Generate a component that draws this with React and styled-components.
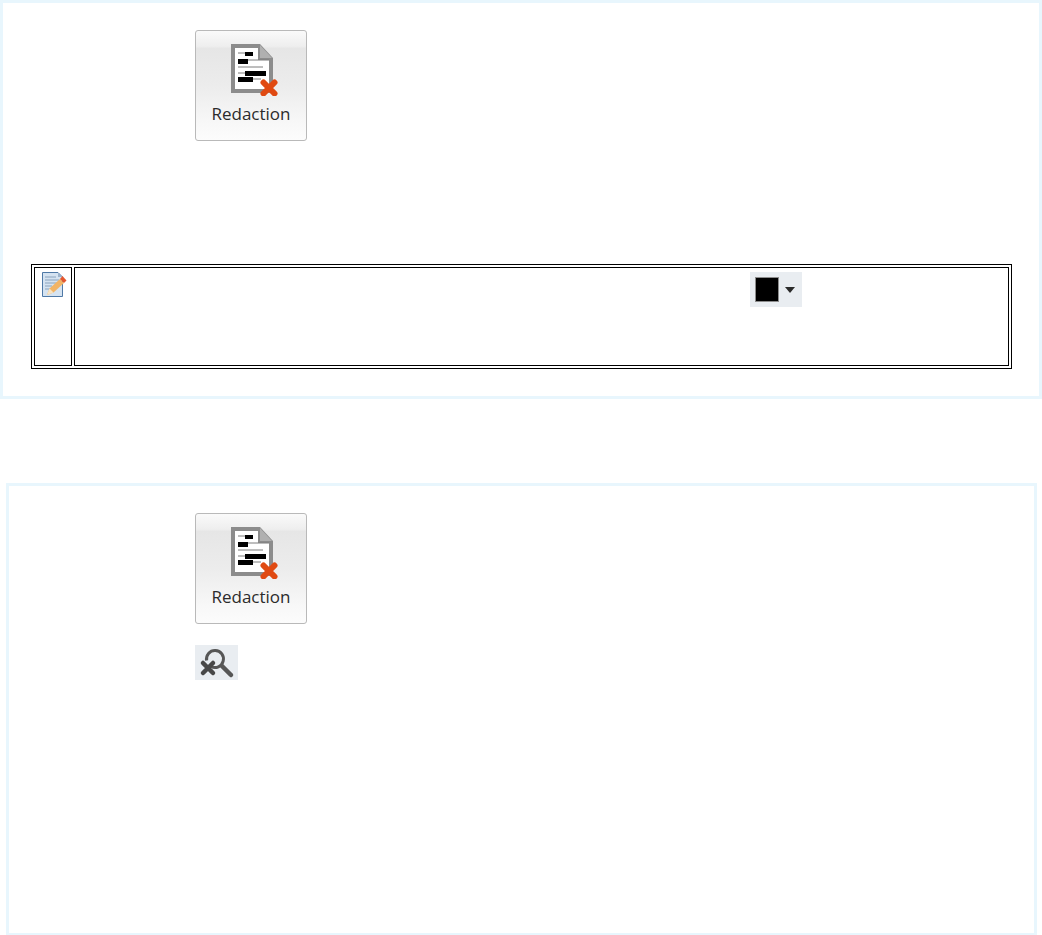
import styled, { createGlobalStyle } from "styled-components";

const GlobalStyle = createGlobalStyle`
  html, body {
    margin: 0;
    padding: 0;
    background: #fff;
    font-family: "Open Sans", "Liberation Sans", sans-serif;
  }
`;

const Page = styled.div`
  width: 1042px;
  height: 935px;
  overflow: hidden;
  display: flex;
  flex-direction: column;
`;

const Panel = styled.section`
  box-sizing: border-box;
  flex: none;
  border: 3px solid #e8f6fd;
  width: ${(props) => props.$width}px;
  height: ${(props) => props.$height}px;
  margin-left: ${(props) => props.$left || 0}px;
  margin-top: ${(props) => props.$top || 0}px;
  padding-top: 27px;
`;

const RibbonButton = styled.div`
  box-sizing: border-box;
  width: 112px;
  height: 111px;
  margin-left: ${(props) => props.$left}px;
  border: 1px solid #b9b9b9;
  border-radius: 3px;
  background: linear-gradient(
    to bottom,
    #fafafa 0%,
    #eeeeee 14%,
    #e6e6e6 16%,
    #ececec 50%,
    #f8f8f8 85%,
    #fcfcfc 100%
  );
  display: flex;
  flex-direction: column;
  align-items: center;
  padding-top: 13px;
  svg {
    margin-left: 8px;
    flex: none;
  }
`;

const RibbonLabel = styled.span`
  font-family: "Open Sans", "Liberation Sans", sans-serif;
  font-size: 17px;
  line-height: 20px;
  margin-top: 8px;
  color: #2b2b2b;
`;

const NoteTable = styled.table`
  box-sizing: border-box;
  width: 981px;
  height: 105px;
  margin: 123px 0 0 28px;
  border: 1px solid #000;
  border-spacing: 2px;
`;

const IconCell = styled.td`
  box-sizing: border-box;
  width: 38px;
  border: 1px solid #000;
  padding: 4px 0 0 7px;
  vertical-align: top;
`;

const BodyCell = styled.td`
  border: 1px solid #000;
  padding: 4px 0 0 675px;
  vertical-align: top;
`;

const ColorChip = styled.div`
  box-sizing: border-box;
  display: flex;
  align-items: center;
  background: #e9edf1;
  width: 52px;
  height: 35px;
  padding-left: 5px;
`;

const Swatch = styled.span`
  box-sizing: border-box;
  width: 24px;
  height: 25px;
  background: #000;
  border: 1px solid #8d8d8d;
  margin-right: 6px;
`;

const Caret = styled.span`
  width: 0;
  height: 0;
  border-left: 5px solid transparent;
  border-right: 5px solid transparent;
  border-top: 6px solid #2a2a2a;
`;

const SearchChip = styled.div`
  width: 43px;
  height: 35px;
  margin: 21px 0 0 186px;
  background: #e9edf1;
  svg {
    display: block;
  }
`;

function RedactionIcon() {
  return (
    <svg width="48" height="52" viewBox="0 0 48 52">
      <path d="M0 0H29L42 14V49H0Z" fill="#8c8c8c" />
      <path d="M4 4H27V16H38V45H4Z" fill="#fff" />
      <path d="M29 1L41 14H29Z" fill="#b0b0b0" />
      <path
        d="M7 9H14M7 16H38M7 23H32M7 29H14M7 35H30"
        stroke="#7d7d7d"
        strokeWidth="1"
      />
      <rect x="14" y="8" width="8" height="4" fill="#000" />
      <rect x="7" y="15" width="10" height="5" fill="#000" />
      <rect x="14" y="27" width="21" height="5" fill="#000" />
      <rect x="7" y="33" width="15" height="5" fill="#000" />
      <path d="M32.5 38.5L43.5 49.5M43.5 38.5L32.5 49.5" stroke="#e04a12" strokeWidth="6" strokeLinecap="round" />
    </svg>
  );
}

function NoteIcon() {
  return (
    <svg width="25" height="25" viewBox="0 0 25 25" style={{ display: "block" }}>
      <path d="M0.5 0.5H16L20.5 5V24.5H0.5Z" fill="#d5e3f1" stroke="#4f79a6" />
      <path d="M16 1V5H20Z" fill="#9db4cc" />
      <path d="M3 5H14M3 8H17M3 11H15M3 14H10M3 17H8" stroke="#8aa3bd" strokeWidth="1" />
      <path d="M5 23L7.5 16.5L18 7L22 11L11.5 20.5Z" fill="#f2b465" />
      <path d="M5 23L7.5 16.5L11.5 20.5Z" fill="#f8e4c4" />
      <path d="M18 7L20.5 4L24.5 8.5L22 11Z" fill="#e4572e" />
    </svg>
  );
}

function ZoomClearIcon() {
  return (
    <svg width="43" height="35" viewBox="0 0 43 35">
      <path d="M11.6 15.5A8.5 8.5 0 1 1 16 21.5" fill="none" stroke="#565656" strokeWidth="3" />
      <path d="M27 21L36 30" stroke="#565656" strokeWidth="4.5" strokeLinecap="round" />
      <path d="M8 18L18 28M18 18L8 28" stroke="#484848" strokeWidth="4.5" strokeLinecap="round" />
    </svg>
  );
}

function RedactionButton({ left }) {
  return (
    <RibbonButton $left={left}>
      <RedactionIcon />
      <RibbonLabel>Redaction</RibbonLabel>
    </RibbonButton>
  );
}

export default function App() {
  return (
    <Page>
      <GlobalStyle />
      <Panel $width={1042} $height={399}>
        <RedactionButton left={192} />
        <NoteTable>
          <tbody>
            <tr>
              <IconCell>
                <NoteIcon />
              </IconCell>
              <BodyCell>
                <ColorChip>
                  <Swatch />
                  <Caret />
                </ColorChip>
              </BodyCell>
            </tr>
          </tbody>
        </NoteTable>
      </Panel>
      <Panel $width={1031} $height={453} $left={6} $top={84}>
        <RedactionButton left={186} />
        <SearchChip>
          <ZoomClearIcon />
        </SearchChip>
      </Panel>
    </Page>
  );
}
